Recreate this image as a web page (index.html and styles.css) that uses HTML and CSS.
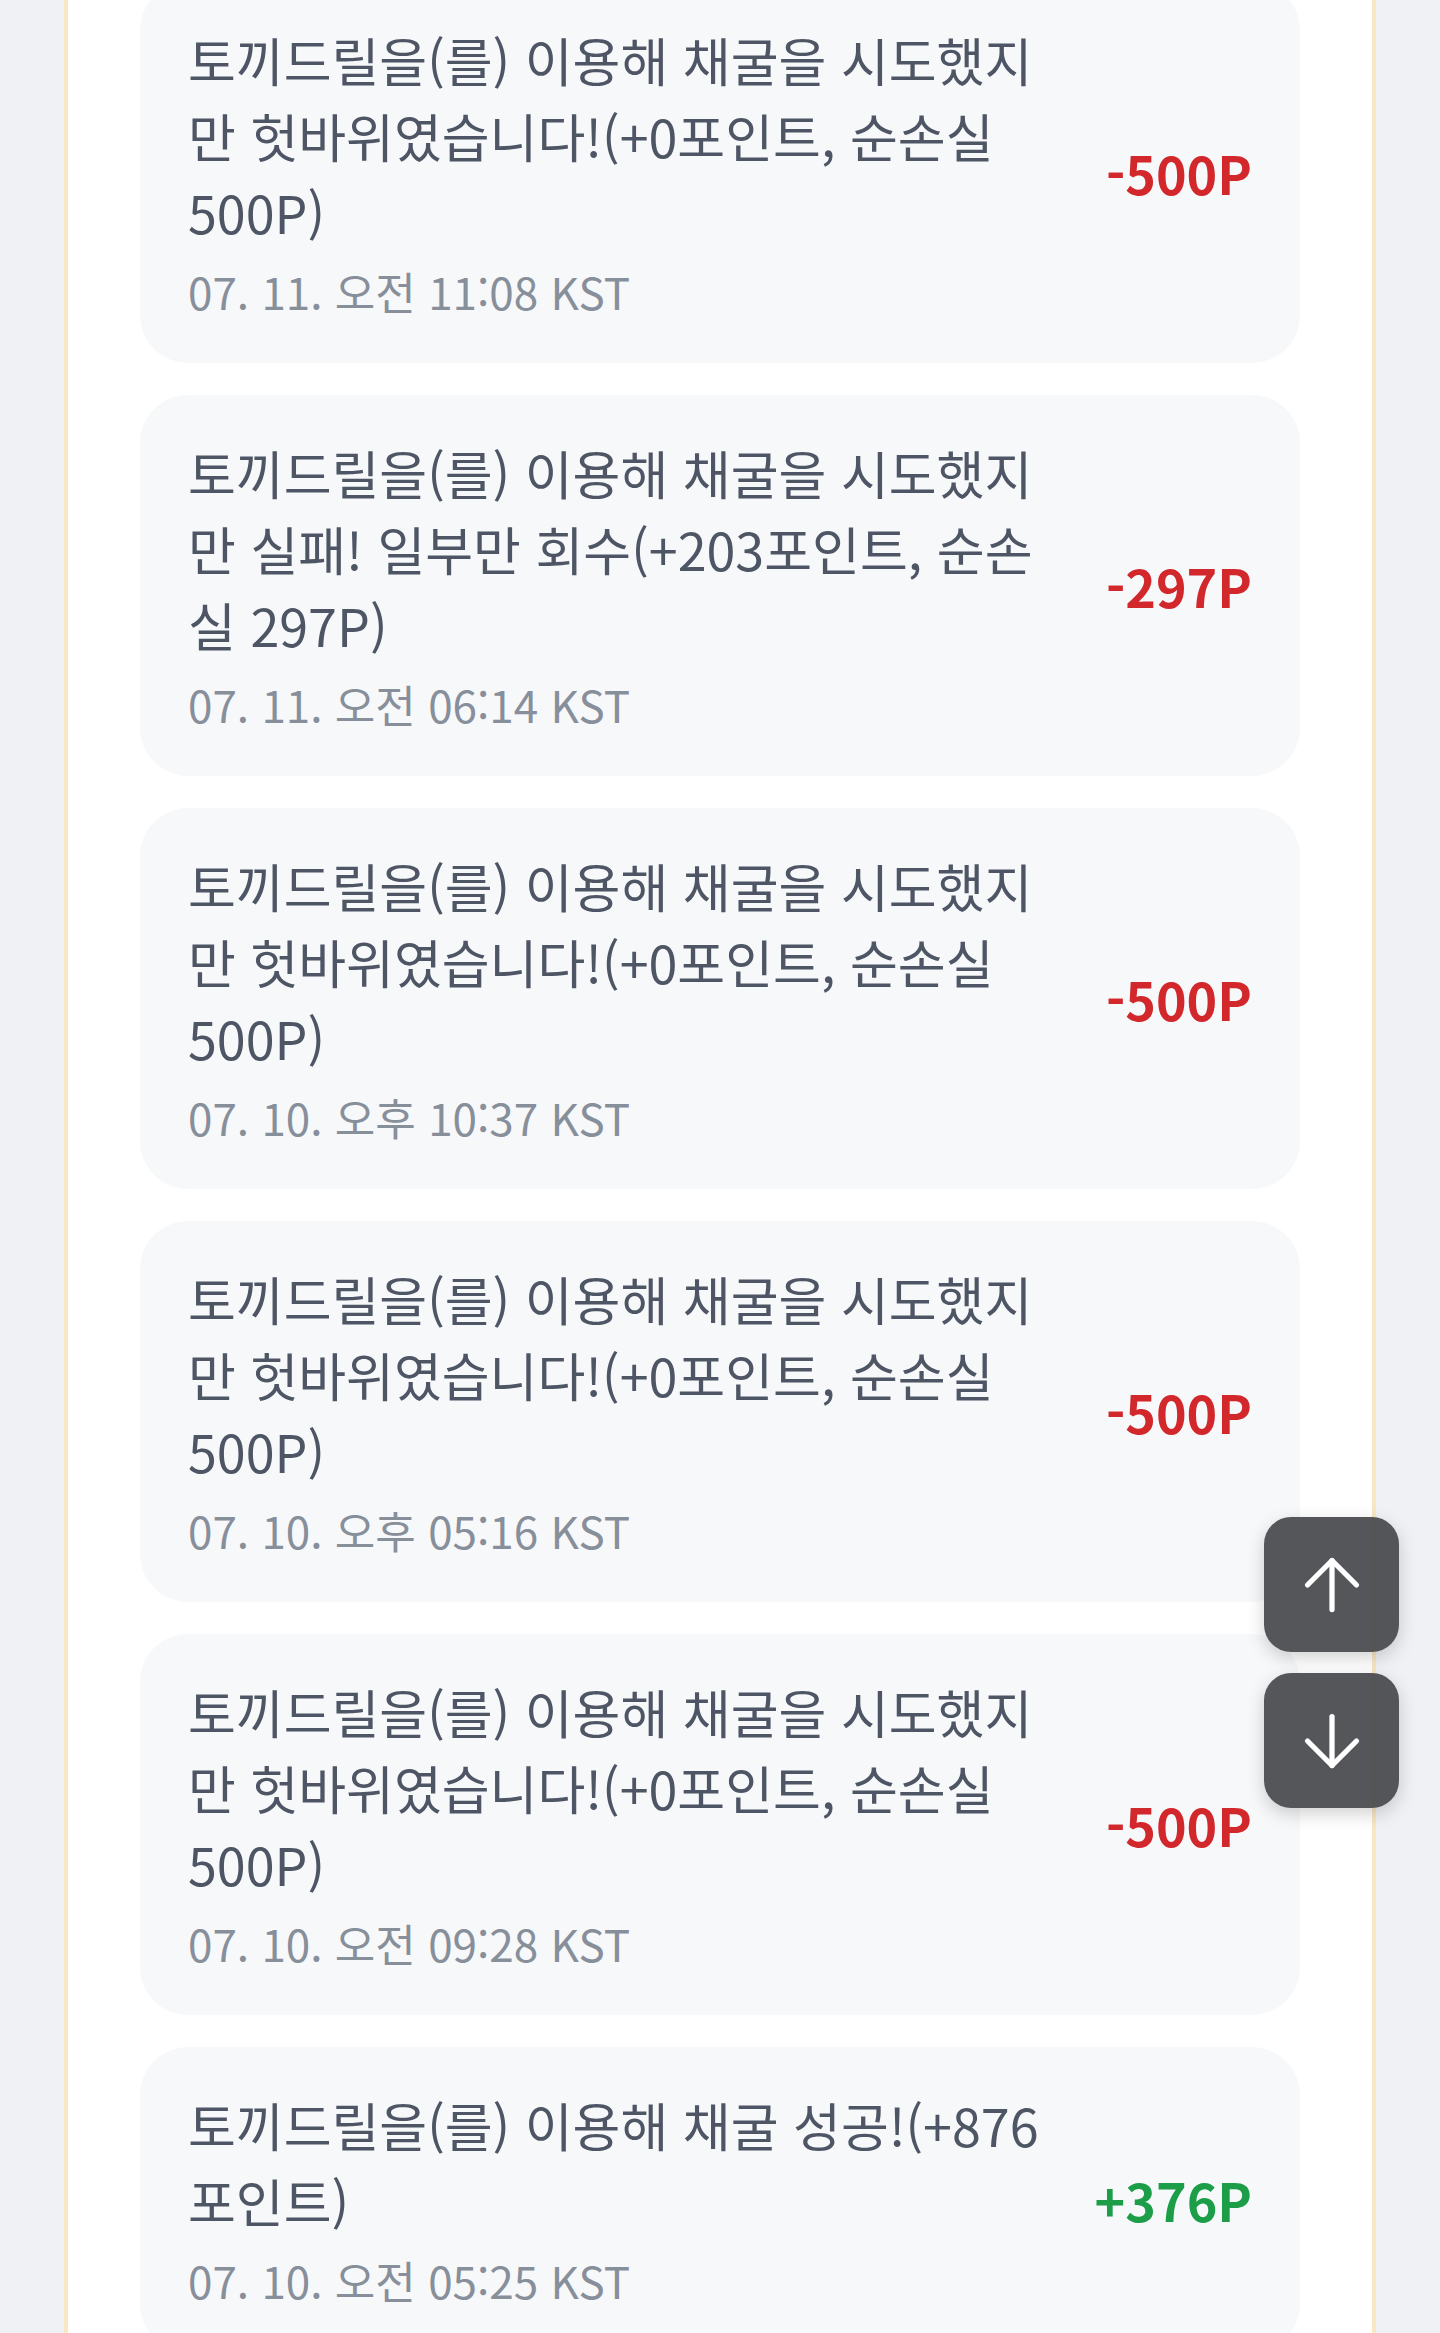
FILE: index.html
```html
<!DOCTYPE html>
<html lang="ko">
<head>
<meta charset="utf-8">
<title>채굴 기록</title>
<link rel="stylesheet" href="styles.css">
</head>
<body>
<main class="panel">
  <ul class="list">
    <li class="card">
      <div class="info">
        <p class="msg">토끼드릴을(를) 이용해 채굴을 시도했지만 헛바위였습니다!(+0포인트, 순손실 500P)</p>
        <p class="date">07. 11. 오전 11:08 KST</p>
      </div>
      <span class="amount minus">-500P</span>
    </li>
    <li class="card">
      <div class="info">
        <p class="msg">토끼드릴을(를) 이용해 채굴을 시도했지만 실패! 일부만 회수(+203포인트, 순손실 297P)</p>
        <p class="date">07. 11. 오전 06:14 KST</p>
      </div>
      <span class="amount minus">-297P</span>
    </li>
    <li class="card">
      <div class="info">
        <p class="msg">토끼드릴을(를) 이용해 채굴을 시도했지만 헛바위였습니다!(+0포인트, 순손실 500P)</p>
        <p class="date">07. 10. 오후 10:37 KST</p>
      </div>
      <span class="amount minus">-500P</span>
    </li>
    <li class="card">
      <div class="info">
        <p class="msg">토끼드릴을(를) 이용해 채굴을 시도했지만 헛바위였습니다!(+0포인트, 순손실 500P)</p>
        <p class="date">07. 10. 오후 05:16 KST</p>
      </div>
      <span class="amount minus">-500P</span>
    </li>
    <li class="card">
      <div class="info">
        <p class="msg">토끼드릴을(를) 이용해 채굴을 시도했지만 헛바위였습니다!(+0포인트, 순손실 500P)</p>
        <p class="date">07. 10. 오전 09:28 KST</p>
      </div>
      <span class="amount minus">-500P</span>
    </li>
    <li class="card">
      <div class="info">
        <p class="msg">토끼드릴을(를) 이용해 채굴 성공!(+876포인트)</p>
        <p class="date">07. 10. 오전 05:25 KST</p>
      </div>
      <span class="amount plus">+376P</span>
    </li>
  </ul>
</main>
<div class="scroll-btns">
  <button class="scroll-btn" type="button" aria-label="맨 위로">
    <svg viewBox="0 0 24 24" width="84" height="84" fill="none" stroke="#ffffff" stroke-width="1.5" stroke-linecap="round" stroke-linejoin="round"><path d="m5 12 7-7 7 7"/><path d="M12 19V5"/></svg>
  </button>
  <button class="scroll-btn" type="button" aria-label="맨 아래로">
    <svg viewBox="0 0 24 24" width="84" height="84" fill="none" stroke="#ffffff" stroke-width="1.5" stroke-linecap="round" stroke-linejoin="round"><path d="M12 5v14"/><path d="m19 12-7 7-7-7"/></svg>
  </button>
</div>
</body>
</html>
```

FILE: styles.css
```css
* { box-sizing: border-box; }

html, body {
  margin: 0;
  padding: 0;
}

body {
  background: #f0f1f4;
  font-family: "Noto Sans CJK KR", "Noto Sans", sans-serif;
  overflow: hidden;
}

.panel {
  display: flow-root;
  width: 1312px;
  min-height: 100vh;
  margin: 0 auto;
  background: #ffffff;
  border-left: 4px solid #f9e6c4;
  border-right: 4px solid #f9e6c4;
  padding: 0 72px;
}

.list {
  list-style: none;
  margin: -18px 0 0;
  padding: 0;
  display: flex;
  flex-direction: column;
  gap: 32px;
}

.card {
  display: flex;
  align-items: center;
  justify-content: space-between;
  background: #f7f8fa;
  border-radius: 48px;
  padding: 40px 48px 40px;
}

.info {
  width: 870px;
}

.msg {
  margin: 0;
  font-size: 52px;
  line-height: 76px;
  color: #4e5665;
}

.date {
  margin: 10px 0 0;
  font-size: 44px;
  line-height: 63px;
  color: #878f9b;
}

.amount {
  font-size: 52px;
  font-weight: 700;
  line-height: 76px;
  white-space: nowrap;
}

.minus { color: #d2282c; }
.plus { color: #1c9d48; }

.scroll-btns {
  position: fixed;
  right: 41px;
  bottom: 525px;
  display: flex;
  flex-direction: column;
  gap: 21px;
}

.scroll-btn {
  width: 135px;
  height: 135px;
  border: none;
  padding: 0;
  border-radius: 27px;
  background: rgba(66, 68, 72, 0.9);
  box-shadow: 0 6px 18px rgba(0, 0, 0, 0.18);
  display: flex;
  align-items: center;
  justify-content: center;
}
```
